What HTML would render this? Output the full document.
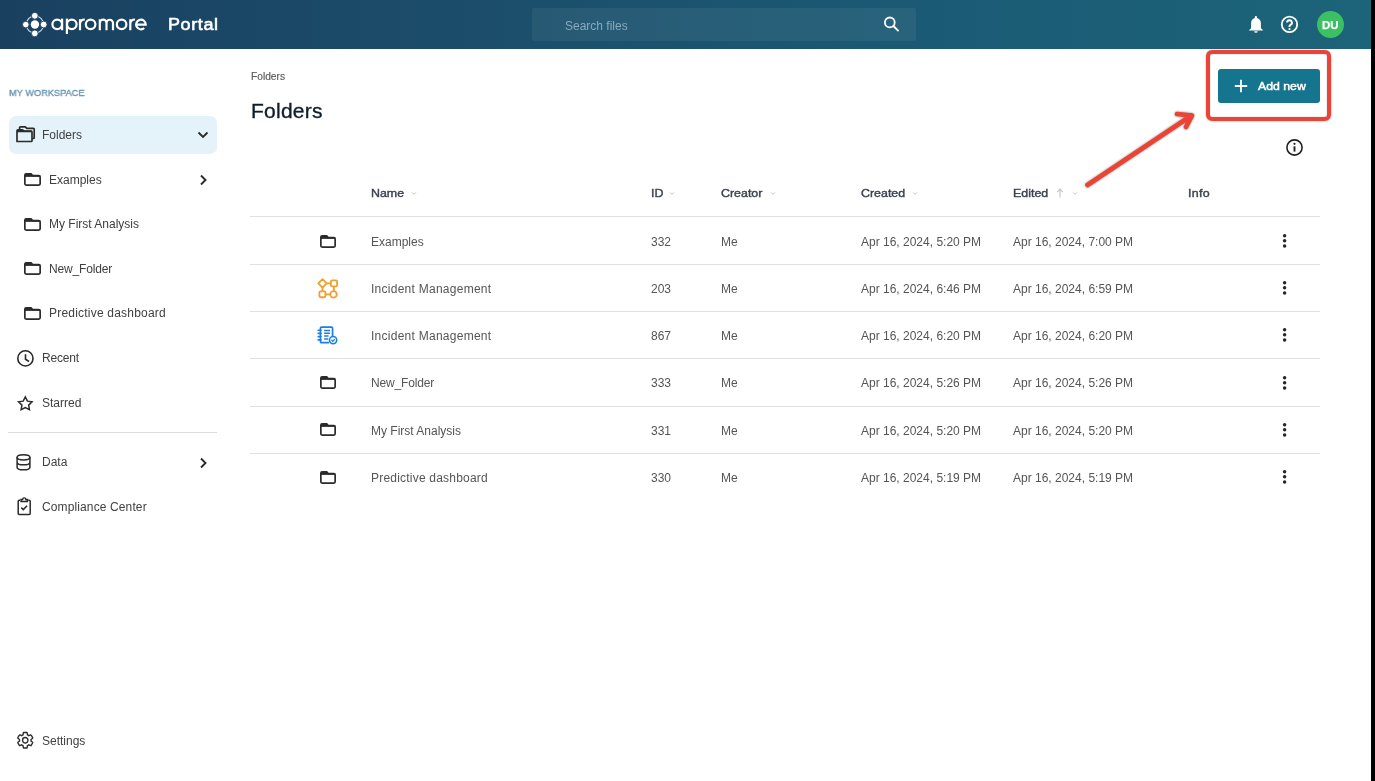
<!DOCTYPE html>
<html><head><meta charset="utf-8">
<style>
html,body{margin:0;padding:0;}
body{width:1375px;height:781px;position:relative;overflow:hidden;background:#fff;
 font-family:"Liberation Sans",sans-serif;}
.t{position:absolute;white-space:nowrap;line-height:1;will-change:transform;}
.a{position:absolute;}
svg{position:absolute;overflow:visible;}
</style></head><body>
<div class="a" style="left:0;top:0;width:1371px;height:49px;background:linear-gradient(90deg,#1a4060 0%,#1b4d6a 33%,#1b5b75 70%,#1c6479 100%);"></div>
<div class="a" style="left:1371px;top:0;width:4px;height:781px;background:#000;"></div>
<svg style="left:0;top:0" width="160" height="49" viewBox="0 0 160 49">
 <circle cx="34.9" cy="24.5" r="8.6" fill="none" stroke="#d0e0ee" stroke-width="1.1"/>
 <g fill="#fff" stroke="#1a4060" stroke-width="0.9">
  <circle cx="34.8" cy="15.8" r="3.4"/><circle cx="25.8" cy="24.6" r="3.3"/>
  <circle cx="43.7" cy="24.5" r="3.4"/><circle cx="34.8" cy="33.4" r="3.4"/>
 </g>
 <circle cx="34.9" cy="24.5" r="4.2" fill="#fff"/>
 <g fill="none" stroke="#fff" stroke-width="2.2">
  <circle cx="57.2" cy="24.35" r="4.8"/><path d="M62.1 18.6V30.2"/>
  <circle cx="71.8" cy="24.35" r="4.8"/><path d="M66.9 18.6V34"/>
  <path d="M80 30.2V19.2M80 24.3Q80 19.5 84.8 19.5"/>
  <circle cx="90.6" cy="24.35" r="4.8"/>
  <path d="M99.8 30.2V19.2M99.8 23A3.35 3.35 0 0 1 106.5 23V30.2M106.5 23A3.25 3.25 0 0 1 113 23V30.2"/>
  <circle cx="121.6" cy="24.35" r="4.8"/>
  <path d="M130.3 30.2V19.2M130.3 24.3Q130.3 19.5 135 19.5"/>
  <path d="M136.1 24.6H145.7A4.8 4.8 0 1 0 144.2 28"/>
 </g>
</svg>
<div class="t" style="left:168.00px;top:16.00px;font-size:17px;font-weight:400;color:#ffffff;letter-spacing:0.55px;-webkit-text-stroke:0.6px #fff;transform:scaleX(1.06);transform-origin:0 0;">Portal</div>
<div class="a" style="left:532px;top:8px;width:384px;height:33px;border-radius:2px;background:rgba(255,255,255,0.06);"></div>
<div class="t" style="left:565.00px;top:20.00px;font-size:12px;font-weight:400;color:#88aabd;letter-spacing:0px;">Search files</div>
<svg style="left:880px;top:14px" width="22" height="22" viewBox="0 0 22 22">
 <circle cx="9.8" cy="8.4" r="4.9" fill="none" stroke="#fff" stroke-width="1.8"/>
 <path d="M13.4 12L18 16.6" stroke="#fff" stroke-width="1.9" stroke-linecap="round"/>
</svg>
<svg style="left:1245px;top:12px" width="22" height="24" viewBox="0 0 22 24">
 <path d="M10.9 4.1C11.5 4.1 12 4.6 12 5.2V5.9C14.3 6.5 15.9 8.5 15.9 11V16.3L17.9 18V18.5H4.1V18L6.1 16.3V11C6.1 8.5 7.6 6.5 9.8 5.9V5.2C9.8 4.6 10.3 4.1 10.9 4.1Z" fill="#fff"/>
 <path d="M9.2 19.2H12.7A1.75 1.5 0 0 1 9.2 19.2Z" fill="#fff"/>
</svg>
<svg style="left:1279px;top:14px" width="22" height="22" viewBox="0 0 22 22">
 <circle cx="10.5" cy="10.4" r="7.7" fill="none" stroke="#fff" stroke-width="1.8"/>
 <path d="M8.1 8.6a2.4 2.4 0 1 1 3.4 2.2c-.7.35-1 .8-1 1.5v.7" fill="none" stroke="#fff" stroke-width="1.95"/>
 <circle cx="10.5" cy="15.1" r="1.15" fill="#fff"/>
</svg>
<div class="a" style="left:1316.8px;top:11px;width:27px;height:27px;border-radius:50%;background:#3cc064;"></div>
<div class="t" style="left:1322.00px;top:20.00px;font-size:11.4px;font-weight:700;color:#ffffff;letter-spacing:0.1px;-webkit-text-stroke:0.25px #fff;">DU</div>
<div class="t" style="left:9.00px;top:88.00px;font-size:9.9px;font-weight:400;color:#6594b0;letter-spacing:0px;-webkit-text-stroke:0.35px #6594b0;transform:scaleX(0.935);transform-origin:0 0;">MY WORKSPACE</div>
<div class="a" style="left:8.5px;top:116px;width:208px;height:37.7px;border-radius:7px;background:#e4f2f9;"></div>
<svg style="left:12px;top:122px" width="24" height="24" viewBox="0 0 24 24">
 <path d="M7.6 7.6V5.6Q7.6 4.8 8.4 4.8H13.3L14.8 6.3H21.4Q22.2 6.3 22.2 7.1V15.7Q22.2 16.5 21.4 16.5H20.2" fill="none" stroke="#2b2b2b" stroke-width="1.7" stroke-linejoin="round"/>
 <path d="M5 8.6V8.5Q5 7.9 5.8 7.9H10.6L11.9 9.2V9.6H5z" fill="#2b2b2b"/>
 <path d="M5 19.5V8.7Q5 7.9 5.8 7.9H10.6L11.9 9.2H19.2Q20 9.2 20 10V18.7Q20 19.5 19.2 19.5H5.8Q5 19.5 5 18.7Z" fill="none" stroke="#2b2b2b" stroke-width="1.7" stroke-linejoin="round"/>
 <path d="M5 9.4H20" stroke="#2b2b2b" stroke-width="1.7"/>
</svg>
<div class="t" style="left:42.00px;top:129.00px;font-size:12px;font-weight:400;color:#404040;letter-spacing:0px;">Folders</div>
<svg style="left:196px;top:129px" width="14" height="12" viewBox="0 0 14 12"><path d="M2.5 3.5L7 8L11.5 3.5" fill="none" stroke="#2b2b2b" stroke-width="1.9"/></svg>
<svg style="left:24px;top:173.2px" width="17" height="13" viewBox="0 0 17 13"><path d="M0.85 3.3000000000000003V2.15Q0.85 0.85 2.15 0.85H7.14L8.74 2.7V3.3000000000000003Z" fill="#2b2b2b"/><path d="M0.85 10.85V2.15Q0.85 0.85 2.15 0.85H7.14L8.74 2.7H14.849999999999998Q16.15 2.7 16.15 4.0V10.85Q16.15 12.15 14.849999999999998 12.15H2.15Q0.85 12.15 0.85 10.85Z" fill="none" stroke="#2b2b2b" stroke-width="1.7" stroke-linejoin="round"/><path d="M0.85 3.0H16.15" stroke="#2b2b2b" stroke-width="1.7"/></svg>
<div class="t" style="left:49.00px;top:174.00px;font-size:12px;font-weight:400;color:#404040;letter-spacing:0px;">Examples</div>
<svg style="left:24px;top:217.6px" width="17" height="13" viewBox="0 0 17 13"><path d="M0.85 3.3000000000000003V2.15Q0.85 0.85 2.15 0.85H7.14L8.74 2.7V3.3000000000000003Z" fill="#2b2b2b"/><path d="M0.85 10.85V2.15Q0.85 0.85 2.15 0.85H7.14L8.74 2.7H14.849999999999998Q16.15 2.7 16.15 4.0V10.85Q16.15 12.15 14.849999999999998 12.15H2.15Q0.85 12.15 0.85 10.85Z" fill="none" stroke="#2b2b2b" stroke-width="1.7" stroke-linejoin="round"/><path d="M0.85 3.0H16.15" stroke="#2b2b2b" stroke-width="1.7"/></svg>
<div class="t" style="left:49.00px;top:218.00px;font-size:12px;font-weight:400;color:#404040;letter-spacing:0px;">My First Analysis</div>
<svg style="left:24px;top:262.3px" width="17" height="13" viewBox="0 0 17 13"><path d="M0.85 3.3000000000000003V2.15Q0.85 0.85 2.15 0.85H7.14L8.74 2.7V3.3000000000000003Z" fill="#2b2b2b"/><path d="M0.85 10.85V2.15Q0.85 0.85 2.15 0.85H7.14L8.74 2.7H14.849999999999998Q16.15 2.7 16.15 4.0V10.85Q16.15 12.15 14.849999999999998 12.15H2.15Q0.85 12.15 0.85 10.85Z" fill="none" stroke="#2b2b2b" stroke-width="1.7" stroke-linejoin="round"/><path d="M0.85 3.0H16.15" stroke="#2b2b2b" stroke-width="1.7"/></svg>
<div class="t" style="left:49.00px;top:263.00px;font-size:12px;font-weight:400;color:#404040;letter-spacing:-0.15px;">New_Folder</div>
<svg style="left:24px;top:306.7px" width="17" height="13" viewBox="0 0 17 13"><path d="M0.85 3.3000000000000003V2.15Q0.85 0.85 2.15 0.85H7.14L8.74 2.7V3.3000000000000003Z" fill="#2b2b2b"/><path d="M0.85 10.85V2.15Q0.85 0.85 2.15 0.85H7.14L8.74 2.7H14.849999999999998Q16.15 2.7 16.15 4.0V10.85Q16.15 12.15 14.849999999999998 12.15H2.15Q0.85 12.15 0.85 10.85Z" fill="none" stroke="#2b2b2b" stroke-width="1.7" stroke-linejoin="round"/><path d="M0.85 3.0H16.15" stroke="#2b2b2b" stroke-width="1.7"/></svg>
<div class="t" style="left:49.00px;top:307.00px;font-size:12px;font-weight:400;color:#404040;letter-spacing:0.21px;">Predictive dashboard</div>
<svg style="left:197px;top:173px" width="12" height="14" viewBox="0 0 12 14"><path d="M4 2.5L8.5 7L4 11.5" fill="none" stroke="#2b2b2b" stroke-width="1.9"/></svg>
<svg style="left:15px;top:348px" width="21" height="21" viewBox="0 0 21 21">
 <circle cx="10.4" cy="10.4" r="7.6" fill="none" stroke="#2b2b2b" stroke-width="1.6"/>
 <path d="M10.5 6.3V11.2L14 13.5" fill="none" stroke="#2b2b2b" stroke-width="1.6"/>
</svg>
<div class="t" style="left:42.00px;top:352.00px;font-size:12px;font-weight:400;color:#404040;letter-spacing:-0.2px;">Recent</div>
<svg style="left:15px;top:393px" width="21" height="20" viewBox="0 0 21 20">
 <path d="M10.30 3.90 L12.39 8.13 L17.05 8.81 L13.68 12.10 L14.47 16.74 L10.30 14.55 L6.13 16.74 L6.92 12.10 L3.55 8.81 L8.21 8.13Z" fill="none" stroke="#2b2b2b" stroke-width="1.5" stroke-linejoin="miter"/>
</svg>
<div class="t" style="left:42.00px;top:397.00px;font-size:12px;font-weight:400;color:#404040;letter-spacing:0px;">Starred</div>
<div class="a" style="left:8px;top:432px;width:208.5px;height:1px;background:#dcdcdc;"></div>
<svg style="left:15px;top:453px" width="18" height="19" viewBox="0 0 18 19">
 <ellipse cx="8.5" cy="4.3" rx="6.4" ry="2.6" fill="none" stroke="#2b2b2b" stroke-width="1.5"/>
 <path d="M2.1 4.3V14.2c0 1.5 2.9 2.6 6.4 2.6s6.4-1.1 6.4-2.6V4.3M2.1 9.2c0 1.5 2.9 2.6 6.4 2.6s6.4-1.1 6.4-2.6" fill="none" stroke="#2b2b2b" stroke-width="1.5"/>
</svg>
<div class="t" style="left:42.00px;top:456.00px;font-size:12px;font-weight:400;color:#404040;letter-spacing:0px;">Data</div>
<svg style="left:197px;top:456px" width="12" height="14" viewBox="0 0 12 14"><path d="M4 2.5L8.5 7L4 11.5" fill="none" stroke="#2b2b2b" stroke-width="1.9"/></svg>
<svg style="left:15px;top:496px" width="18" height="21" viewBox="0 0 18 21">
 <path d="M5.2 4.2H4.2a1 1 0 0 0-1 1V17.5a1 1 0 0 0 1 1h10a1 1 0 0 0 1-1V5.2a1 1 0 0 0-1-1h-1" fill="none" stroke="#2b2b2b" stroke-width="1.5"/>
 <path d="M6 5.5V3.5h1.6a1.6 1.6 0 0 1 3.2 0h1.6v2z" fill="none" stroke="#2b2b2b" stroke-width="1.4"/>
 <path d="M6.3 11.6l2 2 3.8-3.8" fill="none" stroke="#2b2b2b" stroke-width="1.5"/>
</svg>
<div class="t" style="left:42.00px;top:501.00px;font-size:12px;font-weight:400;color:#404040;letter-spacing:0.12px;">Compliance Center</div>
<svg style="left:16.05px;top:731.05px" width="18.5" height="18.5" viewBox="0 0 24 24">
 <path d="M12 15.5A3.5 3.5 0 0 1 8.5 12 3.5 3.5 0 0 1 12 8.5a3.5 3.5 0 0 1 3.5 3.5 3.5 3.5 0 0 1-3.5 3.5m7.43-2.53c.04-.32.07-.64.07-.97s-.03-.66-.07-1l2.11-1.63c.19-.15.24-.42.12-.64l-2-3.46c-.12-.22-.39-.31-.61-.22l-2.49 1c-.52-.39-1.06-.73-1.69-.98l-.37-2.65A.506.506 0 0 0 14 2h-4c-.25 0-.46.18-.5.42l-.37 2.65c-.63.25-1.17.59-1.69.98l-2.49-1c-.22-.09-.49 0-.61.22l-2 3.46c-.13.22-.07.49.12.64L4.57 11c-.04.34-.07.67-.07 1s.03.65.07.97l-2.11 1.66c-.19.15-.25.42-.12.64l2 3.46c.12.22.39.3.61.22l2.49-1.01c.52.4 1.06.74 1.69.99l.37 2.65c.04.24.25.42.5.42h4c.25 0 .46-.18.5-.42l.37-2.65c.63-.26 1.17-.59 1.69-.99l2.49 1.01c.22.08.49 0 .61-.22l2-3.46c.12-.22.07-.49-.12-.64z" fill="none" stroke="#2b2b2b" stroke-width="1.8"/>
</svg>
<div class="t" style="left:42.00px;top:735.00px;font-size:12px;font-weight:400;color:#404040;letter-spacing:0px;">Settings</div>
<div class="t" style="left:251.00px;top:72.00px;font-size:10.2px;font-weight:400;color:#5a5a5a;letter-spacing:0px;-webkit-text-stroke:0.15px #5a5a5a;">Folders</div>
<div class="t" style="left:251.00px;top:100.00px;font-size:21px;font-weight:400;color:#0f1d2c;letter-spacing:0.25px;-webkit-text-stroke:0.35px #0f1d2c;">Folders</div>
<div class="a" style="left:1217.5px;top:69px;width:102.5px;height:34px;border-radius:3px;background:#15758f;"></div>
<svg style="left:1233px;top:78px" width="16" height="16" viewBox="0 0 16 16"><path d="M8 1.8V14.2M1.8 8H14.2" stroke="#fff" stroke-width="1.8"/></svg>
<div class="t" style="left:1258.00px;top:80.00px;font-size:11.6px;font-weight:400;color:#ffffff;letter-spacing:0px;-webkit-text-stroke:0.45px #fff;transform:scaleX(1.06);transform-origin:0 0;">Add new</div>
<div class="a" style="left:1205.6px;top:49.8px;width:117.8px;height:62.8px;border:4.4px solid #ec4334;border-radius:6px;box-shadow:0 0 1.5px rgba(0,0,0,0.45), inset 0 0 1.5px rgba(0,0,0,0.35);"></div>
<svg style="left:0;top:0" width="1375" height="781" viewBox="0 0 1375 781">
 <g fill="none" stroke="#ec4334" stroke-width="4.6" stroke-linecap="round" stroke-linejoin="round" style="filter:drop-shadow(0 0 0.8px rgba(0,0,0,0.5))">
  <path d="M1087.5 185L1191.5 115.5M1177 114L1192 115.5L1186 127"/>
 </g>
</svg>
<svg style="left:1284px;top:137px" width="21" height="21" viewBox="0 0 21 21">
 <circle cx="10.5" cy="10.5" r="7.6" fill="none" stroke="#222" stroke-width="1.6"/>
 <path d="M10.5 9.3V14.6" stroke="#222" stroke-width="1.9"/>
 <circle cx="10.5" cy="6.8" r="1.1" fill="#222"/>
</svg>
<div class="t" style="left:371.00px;top:188.00px;font-size:11.4px;font-weight:400;color:#3a4350;letter-spacing:0px;-webkit-text-stroke:0.4px #3a4350;transform:scaleX(1.09);transform-origin:0 0;">Name</div>
<div class="t" style="left:651.00px;top:188.00px;font-size:11.4px;font-weight:400;color:#3a4350;letter-spacing:0px;-webkit-text-stroke:0.4px #3a4350;transform:scaleX(1.09);transform-origin:0 0;">ID</div>
<div class="t" style="left:721.00px;top:188.00px;font-size:11.4px;font-weight:400;color:#3a4350;letter-spacing:0px;-webkit-text-stroke:0.4px #3a4350;transform:scaleX(1.09);transform-origin:0 0;">Creator</div>
<div class="t" style="left:861.00px;top:188.00px;font-size:11.4px;font-weight:400;color:#3a4350;letter-spacing:0px;-webkit-text-stroke:0.4px #3a4350;transform:scaleX(1.09);transform-origin:0 0;">Created</div>
<div class="t" style="left:1013.00px;top:188.00px;font-size:11.4px;font-weight:400;color:#3a4350;letter-spacing:0px;-webkit-text-stroke:0.4px #3a4350;transform:scaleX(1.09);transform-origin:0 0;">Edited</div>
<div class="t" style="left:1188.00px;top:188.00px;font-size:11.4px;font-weight:400;color:#3a4350;letter-spacing:0.3px;-webkit-text-stroke:0.4px #3a4350;transform:scaleX(1.09);transform-origin:0 0;">Info</div>
<svg style="left:410.5px;top:191px" width="6" height="5" viewBox="0 0 6 5"><path d="M1.1 1.4L3 3.3L4.9 1.4" fill="none" stroke="#c4c4c4" stroke-width="1"/></svg>
<svg style="left:668.5px;top:191px" width="6" height="5" viewBox="0 0 6 5"><path d="M1.1 1.4L3 3.3L4.9 1.4" fill="none" stroke="#c4c4c4" stroke-width="1"/></svg>
<svg style="left:769.5px;top:191px" width="6" height="5" viewBox="0 0 6 5"><path d="M1.1 1.4L3 3.3L4.9 1.4" fill="none" stroke="#c4c4c4" stroke-width="1"/></svg>
<svg style="left:911.5px;top:191px" width="6" height="5" viewBox="0 0 6 5"><path d="M1.1 1.4L3 3.3L4.9 1.4" fill="none" stroke="#c4c4c4" stroke-width="1"/></svg>
<svg style="left:1071.5px;top:191px" width="6" height="5" viewBox="0 0 6 5"><path d="M1.1 1.4L3 3.3L4.9 1.4" fill="none" stroke="#c4c4c4" stroke-width="1"/></svg>
<svg style="left:1055px;top:187px" width="10" height="12" viewBox="0 0 10 12"><path d="M5 2.3V10.5M2.2 5L5 2.2L7.8 5" fill="none" stroke="#c8c8c8" stroke-width="1.2"/></svg>
<div class="a" style="left:250px;top:216px;width:1070px;height:1px;background:#e0e0e0;"></div>
<div class="a" style="left:250px;top:264px;width:1070px;height:1px;background:#e0e0e0;"></div>
<div class="a" style="left:250px;top:311px;width:1070px;height:1px;background:#e0e0e0;"></div>
<div class="a" style="left:250px;top:358px;width:1070px;height:1px;background:#e0e0e0;"></div>
<div class="a" style="left:250px;top:406px;width:1070px;height:1px;background:#e0e0e0;"></div>
<div class="a" style="left:250px;top:453px;width:1070px;height:1px;background:#e0e0e0;"></div>
<svg style="left:320px;top:234.6px" width="16" height="13" viewBox="0 0 16 13"><path d="M0.85 3.3000000000000003V2.15Q0.85 0.85 2.15 0.85H6.72L8.32 2.7V3.3000000000000003Z" fill="#2b2b2b"/><path d="M0.85 10.85V2.15Q0.85 0.85 2.15 0.85H6.72L8.32 2.7H13.85Q15.15 2.7 15.15 4.0V10.85Q15.15 12.15 13.85 12.15H2.15Q0.85 12.15 0.85 10.85Z" fill="none" stroke="#2b2b2b" stroke-width="1.7" stroke-linejoin="round"/><path d="M0.85 3.0H15.15" stroke="#2b2b2b" stroke-width="1.7"/></svg>
<div class="t" style="left:371.00px;top:236.00px;font-size:12px;font-weight:400;color:#555555;letter-spacing:0px;">Examples</div>
<div class="t" style="left:651.00px;top:236.00px;font-size:12px;font-weight:400;color:#555555;letter-spacing:0px;">332</div>
<div class="t" style="left:721.00px;top:236.00px;font-size:12px;font-weight:400;color:#555555;letter-spacing:0px;">Me</div>
<div class="t" style="left:861.00px;top:236.00px;font-size:12px;font-weight:400;color:#555555;letter-spacing:0px;">Apr 16, 2024, 5:20 PM</div>
<div class="t" style="left:1013.00px;top:236.00px;font-size:12px;font-weight:400;color:#555555;letter-spacing:0px;">Apr 16, 2024, 7:00 PM</div>
<svg style="left:1280px;top:231.9px" width="9" height="18" viewBox="0 0 9 18"><g fill="#262626"><circle cx="4.6" cy="3.7" r="1.75"/><circle cx="4.6" cy="8.8" r="1.75"/><circle cx="4.6" cy="13.9" r="1.75"/></g></svg>
<svg style="left:316px;top:276.2px" width="24" height="24" viewBox="0 0 24 24">
 <g fill="none" stroke="#f0a133" stroke-width="1.85">
  <path d="M6.5 3.2L10.7 7.4L6.5 11.6L2.3 7.4z" stroke-linejoin="round"/>
  <rect x="14.9" y="4.4" width="6.2" height="5.9" rx="1.1"/>
  <rect x="3.4" y="15.3" width="6" height="5.9" rx="1.1"/>
  <circle cx="17.5" cy="18.4" r="3.25"/>
  <path d="M10.7 7.4H14.9M6.5 11.6V15.3M17.9 10.3V15.1M9.4 18.3H14.2"/>
 </g></svg>
<div class="t" style="left:371.00px;top:283.00px;font-size:12px;font-weight:400;color:#555555;letter-spacing:0.26px;">Incident Management</div>
<div class="t" style="left:651.00px;top:283.00px;font-size:12px;font-weight:400;color:#555555;letter-spacing:0px;">203</div>
<div class="t" style="left:721.00px;top:283.00px;font-size:12px;font-weight:400;color:#555555;letter-spacing:0px;">Me</div>
<div class="t" style="left:861.00px;top:283.00px;font-size:12px;font-weight:400;color:#555555;letter-spacing:0px;">Apr 16, 2024, 6:46 PM</div>
<div class="t" style="left:1013.00px;top:283.00px;font-size:12px;font-weight:400;color:#555555;letter-spacing:0px;">Apr 16, 2024, 6:59 PM</div>
<svg style="left:1280px;top:279.1px" width="9" height="18" viewBox="0 0 9 18"><g fill="#262626"><circle cx="4.6" cy="3.7" r="1.75"/><circle cx="4.6" cy="8.8" r="1.75"/><circle cx="4.6" cy="13.9" r="1.75"/></g></svg>
<svg style="left:316px;top:323.4px" width="24" height="24" viewBox="0 0 24 24">
 <g fill="none" stroke="#1c7fe2" stroke-width="1.7">
  <path d="M13.2 19.65H5.45a1 1 0 0 1-1-1V5.05a1 1 0 0 1 1-1H15.55a1 1 0 0 1 1 1V13.4"/>
  <path d="M8.1 7.5H14M8.1 10.2H14M8.1 12.9H12.6M8.1 15.9H12.2" stroke-width="1.45"/>
  <path d="M2.2 7.3H5M2.2 10.4H5M2.2 13.6H5M2.2 16.9H5" stroke-width="1.6" stroke-linecap="round"/>
 </g>
 <circle cx="17.1" cy="17.1" r="3.6" fill="#fff" stroke="#1c7fe2" stroke-width="1.6"/>
 <path d="M15.5 16.9L16.8 18.2L18.8 16.1" fill="none" stroke="#1c7fe2" stroke-width="1.3"/>
</svg>
<div class="t" style="left:371.00px;top:330.00px;font-size:12px;font-weight:400;color:#555555;letter-spacing:0.26px;">Incident Management</div>
<div class="t" style="left:651.00px;top:330.00px;font-size:12px;font-weight:400;color:#555555;letter-spacing:0px;">867</div>
<div class="t" style="left:721.00px;top:330.00px;font-size:12px;font-weight:400;color:#555555;letter-spacing:0px;">Me</div>
<div class="t" style="left:861.00px;top:330.00px;font-size:12px;font-weight:400;color:#555555;letter-spacing:0px;">Apr 16, 2024, 6:20 PM</div>
<div class="t" style="left:1013.00px;top:330.00px;font-size:12px;font-weight:400;color:#555555;letter-spacing:0px;">Apr 16, 2024, 6:20 PM</div>
<svg style="left:1280px;top:326.3px" width="9" height="18" viewBox="0 0 9 18"><g fill="#262626"><circle cx="4.6" cy="3.7" r="1.75"/><circle cx="4.6" cy="8.8" r="1.75"/><circle cx="4.6" cy="13.9" r="1.75"/></g></svg>
<svg style="left:320px;top:376.2px" width="16" height="13" viewBox="0 0 16 13"><path d="M0.85 3.3000000000000003V2.15Q0.85 0.85 2.15 0.85H6.72L8.32 2.7V3.3000000000000003Z" fill="#2b2b2b"/><path d="M0.85 10.85V2.15Q0.85 0.85 2.15 0.85H6.72L8.32 2.7H13.85Q15.15 2.7 15.15 4.0V10.85Q15.15 12.15 13.85 12.15H2.15Q0.85 12.15 0.85 10.85Z" fill="none" stroke="#2b2b2b" stroke-width="1.7" stroke-linejoin="round"/><path d="M0.85 3.0H15.15" stroke="#2b2b2b" stroke-width="1.7"/></svg>
<div class="t" style="left:371.00px;top:377.00px;font-size:12px;font-weight:400;color:#555555;letter-spacing:-0.15px;">New_Folder</div>
<div class="t" style="left:651.00px;top:377.00px;font-size:12px;font-weight:400;color:#555555;letter-spacing:0px;">333</div>
<div class="t" style="left:721.00px;top:377.00px;font-size:12px;font-weight:400;color:#555555;letter-spacing:0px;">Me</div>
<div class="t" style="left:861.00px;top:377.00px;font-size:12px;font-weight:400;color:#555555;letter-spacing:0px;">Apr 16, 2024, 5:26 PM</div>
<div class="t" style="left:1013.00px;top:377.00px;font-size:12px;font-weight:400;color:#555555;letter-spacing:0px;">Apr 16, 2024, 5:26 PM</div>
<svg style="left:1280px;top:373.5px" width="9" height="18" viewBox="0 0 9 18"><g fill="#262626"><circle cx="4.6" cy="3.7" r="1.75"/><circle cx="4.6" cy="8.8" r="1.75"/><circle cx="4.6" cy="13.9" r="1.75"/></g></svg>
<svg style="left:320px;top:423.4px" width="16" height="13" viewBox="0 0 16 13"><path d="M0.85 3.3000000000000003V2.15Q0.85 0.85 2.15 0.85H6.72L8.32 2.7V3.3000000000000003Z" fill="#2b2b2b"/><path d="M0.85 10.85V2.15Q0.85 0.85 2.15 0.85H6.72L8.32 2.7H13.85Q15.15 2.7 15.15 4.0V10.85Q15.15 12.15 13.85 12.15H2.15Q0.85 12.15 0.85 10.85Z" fill="none" stroke="#2b2b2b" stroke-width="1.7" stroke-linejoin="round"/><path d="M0.85 3.0H15.15" stroke="#2b2b2b" stroke-width="1.7"/></svg>
<div class="t" style="left:371.00px;top:425.00px;font-size:12px;font-weight:400;color:#555555;letter-spacing:0px;">My First Analysis</div>
<div class="t" style="left:651.00px;top:425.00px;font-size:12px;font-weight:400;color:#555555;letter-spacing:0px;">331</div>
<div class="t" style="left:721.00px;top:425.00px;font-size:12px;font-weight:400;color:#555555;letter-spacing:0px;">Me</div>
<div class="t" style="left:861.00px;top:425.00px;font-size:12px;font-weight:400;color:#555555;letter-spacing:0px;">Apr 16, 2024, 5:20 PM</div>
<div class="t" style="left:1013.00px;top:425.00px;font-size:12px;font-weight:400;color:#555555;letter-spacing:0px;">Apr 16, 2024, 5:20 PM</div>
<svg style="left:1280px;top:420.7px" width="9" height="18" viewBox="0 0 9 18"><g fill="#262626"><circle cx="4.6" cy="3.7" r="1.75"/><circle cx="4.6" cy="8.8" r="1.75"/><circle cx="4.6" cy="13.9" r="1.75"/></g></svg>
<svg style="left:320px;top:470.6px" width="16" height="13" viewBox="0 0 16 13"><path d="M0.85 3.3000000000000003V2.15Q0.85 0.85 2.15 0.85H6.72L8.32 2.7V3.3000000000000003Z" fill="#2b2b2b"/><path d="M0.85 10.85V2.15Q0.85 0.85 2.15 0.85H6.72L8.32 2.7H13.85Q15.15 2.7 15.15 4.0V10.85Q15.15 12.15 13.85 12.15H2.15Q0.85 12.15 0.85 10.85Z" fill="none" stroke="#2b2b2b" stroke-width="1.7" stroke-linejoin="round"/><path d="M0.85 3.0H15.15" stroke="#2b2b2b" stroke-width="1.7"/></svg>
<div class="t" style="left:371.00px;top:472.00px;font-size:12px;font-weight:400;color:#555555;letter-spacing:0.21px;">Predictive dashboard</div>
<div class="t" style="left:651.00px;top:472.00px;font-size:12px;font-weight:400;color:#555555;letter-spacing:0px;">330</div>
<div class="t" style="left:721.00px;top:472.00px;font-size:12px;font-weight:400;color:#555555;letter-spacing:0px;">Me</div>
<div class="t" style="left:861.00px;top:472.00px;font-size:12px;font-weight:400;color:#555555;letter-spacing:0px;">Apr 16, 2024, 5:19 PM</div>
<div class="t" style="left:1013.00px;top:472.00px;font-size:12px;font-weight:400;color:#555555;letter-spacing:0px;">Apr 16, 2024, 5:19 PM</div>
<svg style="left:1280px;top:467.9px" width="9" height="18" viewBox="0 0 9 18"><g fill="#262626"><circle cx="4.6" cy="3.7" r="1.75"/><circle cx="4.6" cy="8.8" r="1.75"/><circle cx="4.6" cy="13.9" r="1.75"/></g></svg>
</body></html>
